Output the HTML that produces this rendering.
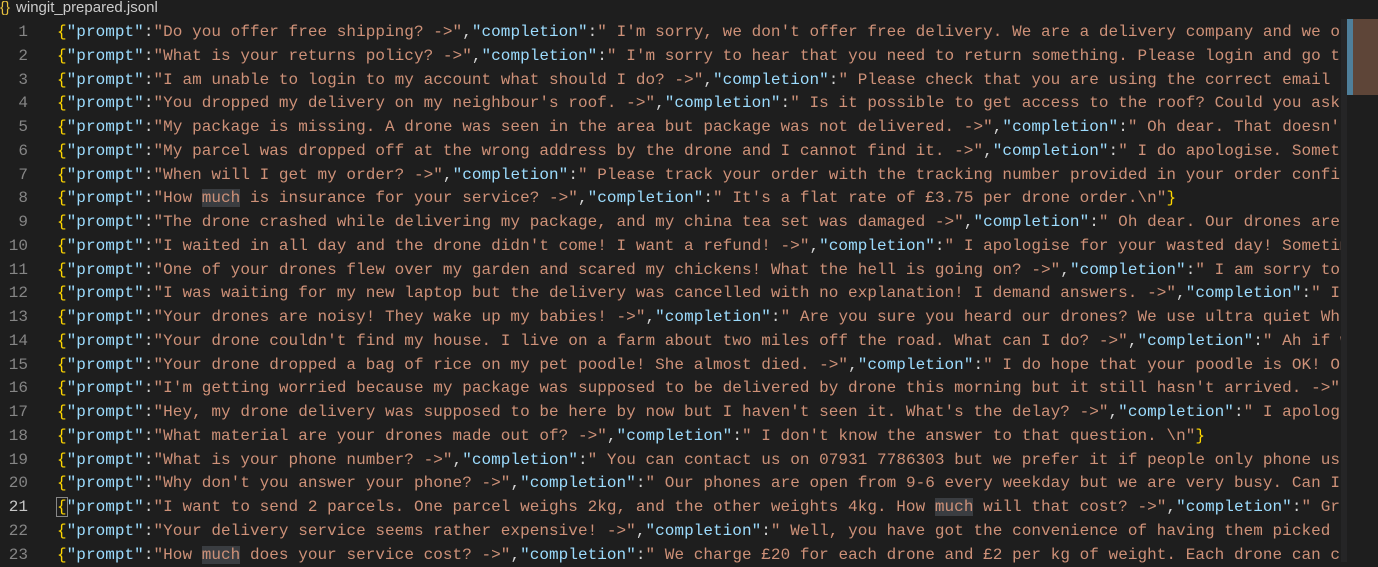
<!DOCTYPE html>
<html><head><meta charset="utf-8"><style>
body{margin:0;background:#1e1e1e;width:1378px;height:562px;overflow:hidden;position:relative;font-family:"Liberation Mono",monospace;}
.tab{position:absolute;left:0;top:0;height:18px;font:15px "Liberation Sans",sans-serif;color:#cccccc;line-height:16px;}
.tab i{font-style:normal;color:#e8c13f;margin-right:6px;}
.ed{position:absolute;left:0;top:21px;width:1341px;overflow:hidden;}
.l{height:23.75px;line-height:23.75px;white-space:pre;font-size:16px;position:relative;letter-spacing:0.045px;}
.n{position:absolute;left:0;width:28px;text-align:right;color:#858585;letter-spacing:0;}
.cur .n{color:#c6c6c6;}
.c{position:absolute;left:57px;color:#d4d4d4;}
b{font-weight:normal;color:#ffd700;}
k{color:#9cdcfe;}
s{text-decoration:none;color:#ce9178;}
m{background:#3a3d41;}
.bx{outline:1px solid #888;}
.mm{position:absolute;left:1347px;top:19px;width:31px;height:76px;background:#5e4538;}
.mm:before{content:"";position:absolute;left:0;top:0;width:6px;height:76px;background:#4f7f9a;}
.sb{position:absolute;left:1341px;top:19px;width:6px;height:543px;background:#252526;}
</style></head><body>
<div class="tab"><i>{}</i>wingit_prepared.jsonl</div>
<div class="sb"></div><div class="mm"></div>
<div class="ed">
<div class="l"><span class="n">1</span><span class="c"><b>{</b><k>"prompt"</k>:<s>"Do you offer free shipping? -&gt;"</s>,<k>"completion"</k>:<s>" I'm sorry, we don't offer free delivery. We are a delivery company and we offer</s></span></div>
<div class="l"><span class="n">2</span><span class="c"><b>{</b><k>"prompt"</k>:<s>"What is your returns policy? -&gt;"</s>,<k>"completion"</k>:<s>" I'm sorry to hear that you need to return something. Please login and go to</s></span></div>
<div class="l"><span class="n">3</span><span class="c"><b>{</b><k>"prompt"</k>:<s>"I am unable to login to my account what should I do? -&gt;"</s>,<k>"completion"</k>:<s>" Please check that you are using the correct email and</s></span></div>
<div class="l"><span class="n">4</span><span class="c"><b>{</b><k>"prompt"</k>:<s>"You dropped my delivery on my neighbour's roof. -&gt;"</s>,<k>"completion"</k>:<s>" Is it possible to get access to the roof? Could you ask</s></span></div>
<div class="l"><span class="n">5</span><span class="c"><b>{</b><k>"prompt"</k>:<s>"My package is missing. A drone was seen in the area but package was not delivered. -&gt;"</s>,<k>"completion"</k>:<s>" Oh dear. That doesn't</s></span></div>
<div class="l"><span class="n">6</span><span class="c"><b>{</b><k>"prompt"</k>:<s>"My parcel was dropped off at the wrong address by the drone and I cannot find it. -&gt;"</s>,<k>"completion"</k>:<s>" I do apologise. Sometimes</s></span></div>
<div class="l"><span class="n">7</span><span class="c"><b>{</b><k>"prompt"</k>:<s>"When will I get my order? -&gt;"</s>,<k>"completion"</k>:<s>" Please track your order with the tracking number provided in your order confirmation</s></span></div>
<div class="l"><span class="n">8</span><span class="c"><b>{</b><k>"prompt"</k>:<s>"How <m>much</m> is insurance for your service? -&gt;"</s>,<k>"completion"</k>:<s>" It's a flat rate of £3.75 per drone order.\n"</s><b>}</b></span></div>
<div class="l"><span class="n">9</span><span class="c"><b>{</b><k>"prompt"</k>:<s>"The drone crashed while delivering my package, and my china tea set was damaged -&gt;"</s>,<k>"completion"</k>:<s>" Oh dear. Our drones are very</s></span></div>
<div class="l"><span class="n">10</span><span class="c"><b>{</b><k>"prompt"</k>:<s>"I waited in all day and the drone didn't come! I want a refund! -&gt;"</s>,<k>"completion"</k>:<s>" I apologise for your wasted day! Sometimes</s></span></div>
<div class="l"><span class="n">11</span><span class="c"><b>{</b><k>"prompt"</k>:<s>"One of your drones flew over my garden and scared my chickens! What the hell is going on? -&gt;"</s>,<k>"completion"</k>:<s>" I am sorry to</s></span></div>
<div class="l"><span class="n">12</span><span class="c"><b>{</b><k>"prompt"</k>:<s>"I was waiting for my new laptop but the delivery was cancelled with no explanation! I demand answers. -&gt;"</s>,<k>"completion"</k>:<s>" I am</s></span></div>
<div class="l"><span class="n">13</span><span class="c"><b>{</b><k>"prompt"</k>:<s>"Your drones are noisy! They wake up my babies! -&gt;"</s>,<k>"completion"</k>:<s>" Are you sure you heard our drones? We use ultra quiet Whisper</s></span></div>
<div class="l"><span class="n">14</span><span class="c"><b>{</b><k>"prompt"</k>:<s>"Your drone couldn't find my house. I live on a farm about two miles off the road. What can I do? -&gt;"</s>,<k>"completion"</k>:<s>" Ah if we</s></span></div>
<div class="l"><span class="n">15</span><span class="c"><b>{</b><k>"prompt"</k>:<s>"Your drone dropped a bag of rice on my pet poodle! She almost died. -&gt;"</s>,<k>"completion"</k>:<s>" I do hope that your poodle is OK! Our</s></span></div>
<div class="l"><span class="n">16</span><span class="c"><b>{</b><k>"prompt"</k>:<s>"I'm getting worried because my package was supposed to be delivered by drone this morning but it still hasn't arrived. -&gt;"</s>,<k>"completion"</k></span></div>
<div class="l"><span class="n">17</span><span class="c"><b>{</b><k>"prompt"</k>:<s>"Hey, my drone delivery was supposed to be here by now but I haven't seen it. What's the delay? -&gt;"</s>,<k>"completion"</k>:<s>" I apologise</s></span></div>
<div class="l"><span class="n">18</span><span class="c"><b>{</b><k>"prompt"</k>:<s>"What material are your drones made out of? -&gt;"</s>,<k>"completion"</k>:<s>" I don't know the answer to that question. \n"</s><b>}</b></span></div>
<div class="l"><span class="n">19</span><span class="c"><b>{</b><k>"prompt"</k>:<s>"What is your phone number? -&gt;"</s>,<k>"completion"</k>:<s>" You can contact us on 07931 7786303 but we prefer it if people only phone us</s></span></div>
<div class="l"><span class="n">20</span><span class="c"><b>{</b><k>"prompt"</k>:<s>"Why don't you answer your phone? -&gt;"</s>,<k>"completion"</k>:<s>" Our phones are open from 9-6 every weekday but we are very busy. Can I help</s></span></div>
<div class="l cur"><span class="n">21</span><span class="c"><b class="bx">{</b><k>"prompt"</k>:<s>"I want to send 2 parcels. One parcel weighs 2kg, and the other weights 4kg. How <m>much</m> will that cost? -&gt;"</s>,<k>"completion"</k>:<s>" Great</s></span></div>
<div class="l"><span class="n">22</span><span class="c"><b>{</b><k>"prompt"</k>:<s>"Your delivery service seems rather expensive! -&gt;"</s>,<k>"completion"</k>:<s>" Well, you have got the convenience of having them picked up</s></span></div>
<div class="l"><span class="n">23</span><span class="c"><b>{</b><k>"prompt"</k>:<s>"How <m>much</m> does your service cost? -&gt;"</s>,<k>"completion"</k>:<s>" We charge £20 for each drone and £2 per kg of weight. Each drone can carry</s></span></div>
</div>
</body></html>
